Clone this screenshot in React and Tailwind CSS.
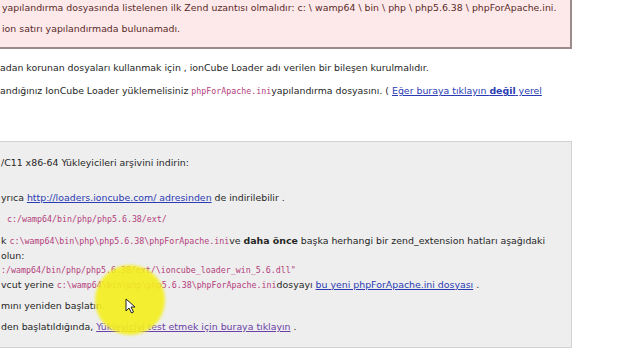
import React from 'react'

const Mono = ({ children }) => (
  <span className="font-['DejaVu_Sans_Mono',monospace] text-[8.3px] text-[#b4407c]">{children}</span>
)

const Link = ({ children, visited }) => (
  <span className={`underline ${visited ? 'text-[#6a3fa6]' : 'text-[#2b3bb3]'}`}>{children}</span>
)

const Line = ({ className = '', children }) => (
  <div className={`h-[21px] leading-[21px] whitespace-nowrap ${className}`}>{children}</div>
)

const Row = ({ className = '', children }) => (
  <div className={`h-[14.5px] leading-[14.5px] whitespace-nowrap ${className}`}>{children}</div>
)

const App = () => {
  return (
    <div className="relative w-[640px] h-[360px] overflow-hidden bg-white font-['DejaVu_Sans',sans-serif] text-[9.4px] text-[#262626]">
      {/* error box */}
      <div className="-mt-[5px] -ml-[10px] w-[582px] pl-[10px] pb-[8px] bg-[#fde9e9] border-2 border-[#9b8b8b] text-[#5a2a2a]">
        <Line>yapılandırma dosyasında listelenen ilk Zend uzantısı olmalıdır: c: \ wamp64 \ bin \ php \ php5.6.38 \ phpForApache.ini.</Line>
        <Line>ion satırı yapılandırmada bulunamadı.</Line>
      </div>

      <Line className="mt-[8px]">adan korunan dosyaları kullanmak için , ionCube Loader adı verilen bir bileşen kurulmalıdır.</Line>
      <Line className="mt-[2px]">
        andığınız IonCube Loader yüklemelisiniz <Mono>phpForApache.ini</Mono>yapılandırma dosyasını. ( <Link>Eğer buraya tıklayın <b>değil</b> yerel</Link>
      </Line>

      {/* instructions box */}
      <div className="mt-[40px] -ml-[10px] w-[582px] pl-[10px] pt-[10px] pb-[10px] bg-[#eeeeee] border border-[#d2d2d2]">
        <Line>/C11 x86-64 Yükleyicileri arşivini indirin:</Line>
        <Line className="mt-[14px]">yrıca <Link>http://loaders.ioncube.com/ adresinden</Link> de indirilebilir .</Line>
        <Line className="pl-[6px]"><Mono>c:/wamp64/bin/php/php5.6.38/ext/</Mono></Line>
        <div className="mt-[5px]">
          <Row>k <Mono>c:\wamp64\bin\php\php5.6.38\phpForApache.ini</Mono>ve <b>daha önce</b> başka herhangi bir zend_extension hatları aşağıdaki</Row>
          <Row>olun:</Row>
          <Row><Mono>:/wamp64/bin/php/php5.6.38/ext/\ioncube_loader_win_5.6.dll"</Mono></Row>
          <Row>vcut yerine <Mono>c:\wamp64\bin\php\php5.6.38\phpForApache.ini</Mono>dosyayı <Link>bu yeni phpForApache.ini dosyası</Link> .</Row>
        </div>
        <Line className="mt-[3px]">mını yeniden başlatın.</Line>
        <Line>den başlatıldığında, <Link visited>Yükleyiciyi test etmek için buraya tıklayın</Link> .</Line>
      </div>

      {/* cursor highlight */}
      <div className="absolute left-[95px] top-[265px] w-[70px] h-[70px] rounded-full bg-[#f4ef1c] opacity-90 blur-[1.5px]" />
      <svg className="absolute left-[125px] top-[298px]" width="12" height="16" viewBox="0 0 12 16">
        <path d="M1 1 L1 13 L4 10 L6.5 15 L8.5 14 L6 9 L10 9 Z" fill="#fff" stroke="#222" strokeWidth="1" strokeLinejoin="round" />
      </svg>
    </div>
  )
}

export default App
